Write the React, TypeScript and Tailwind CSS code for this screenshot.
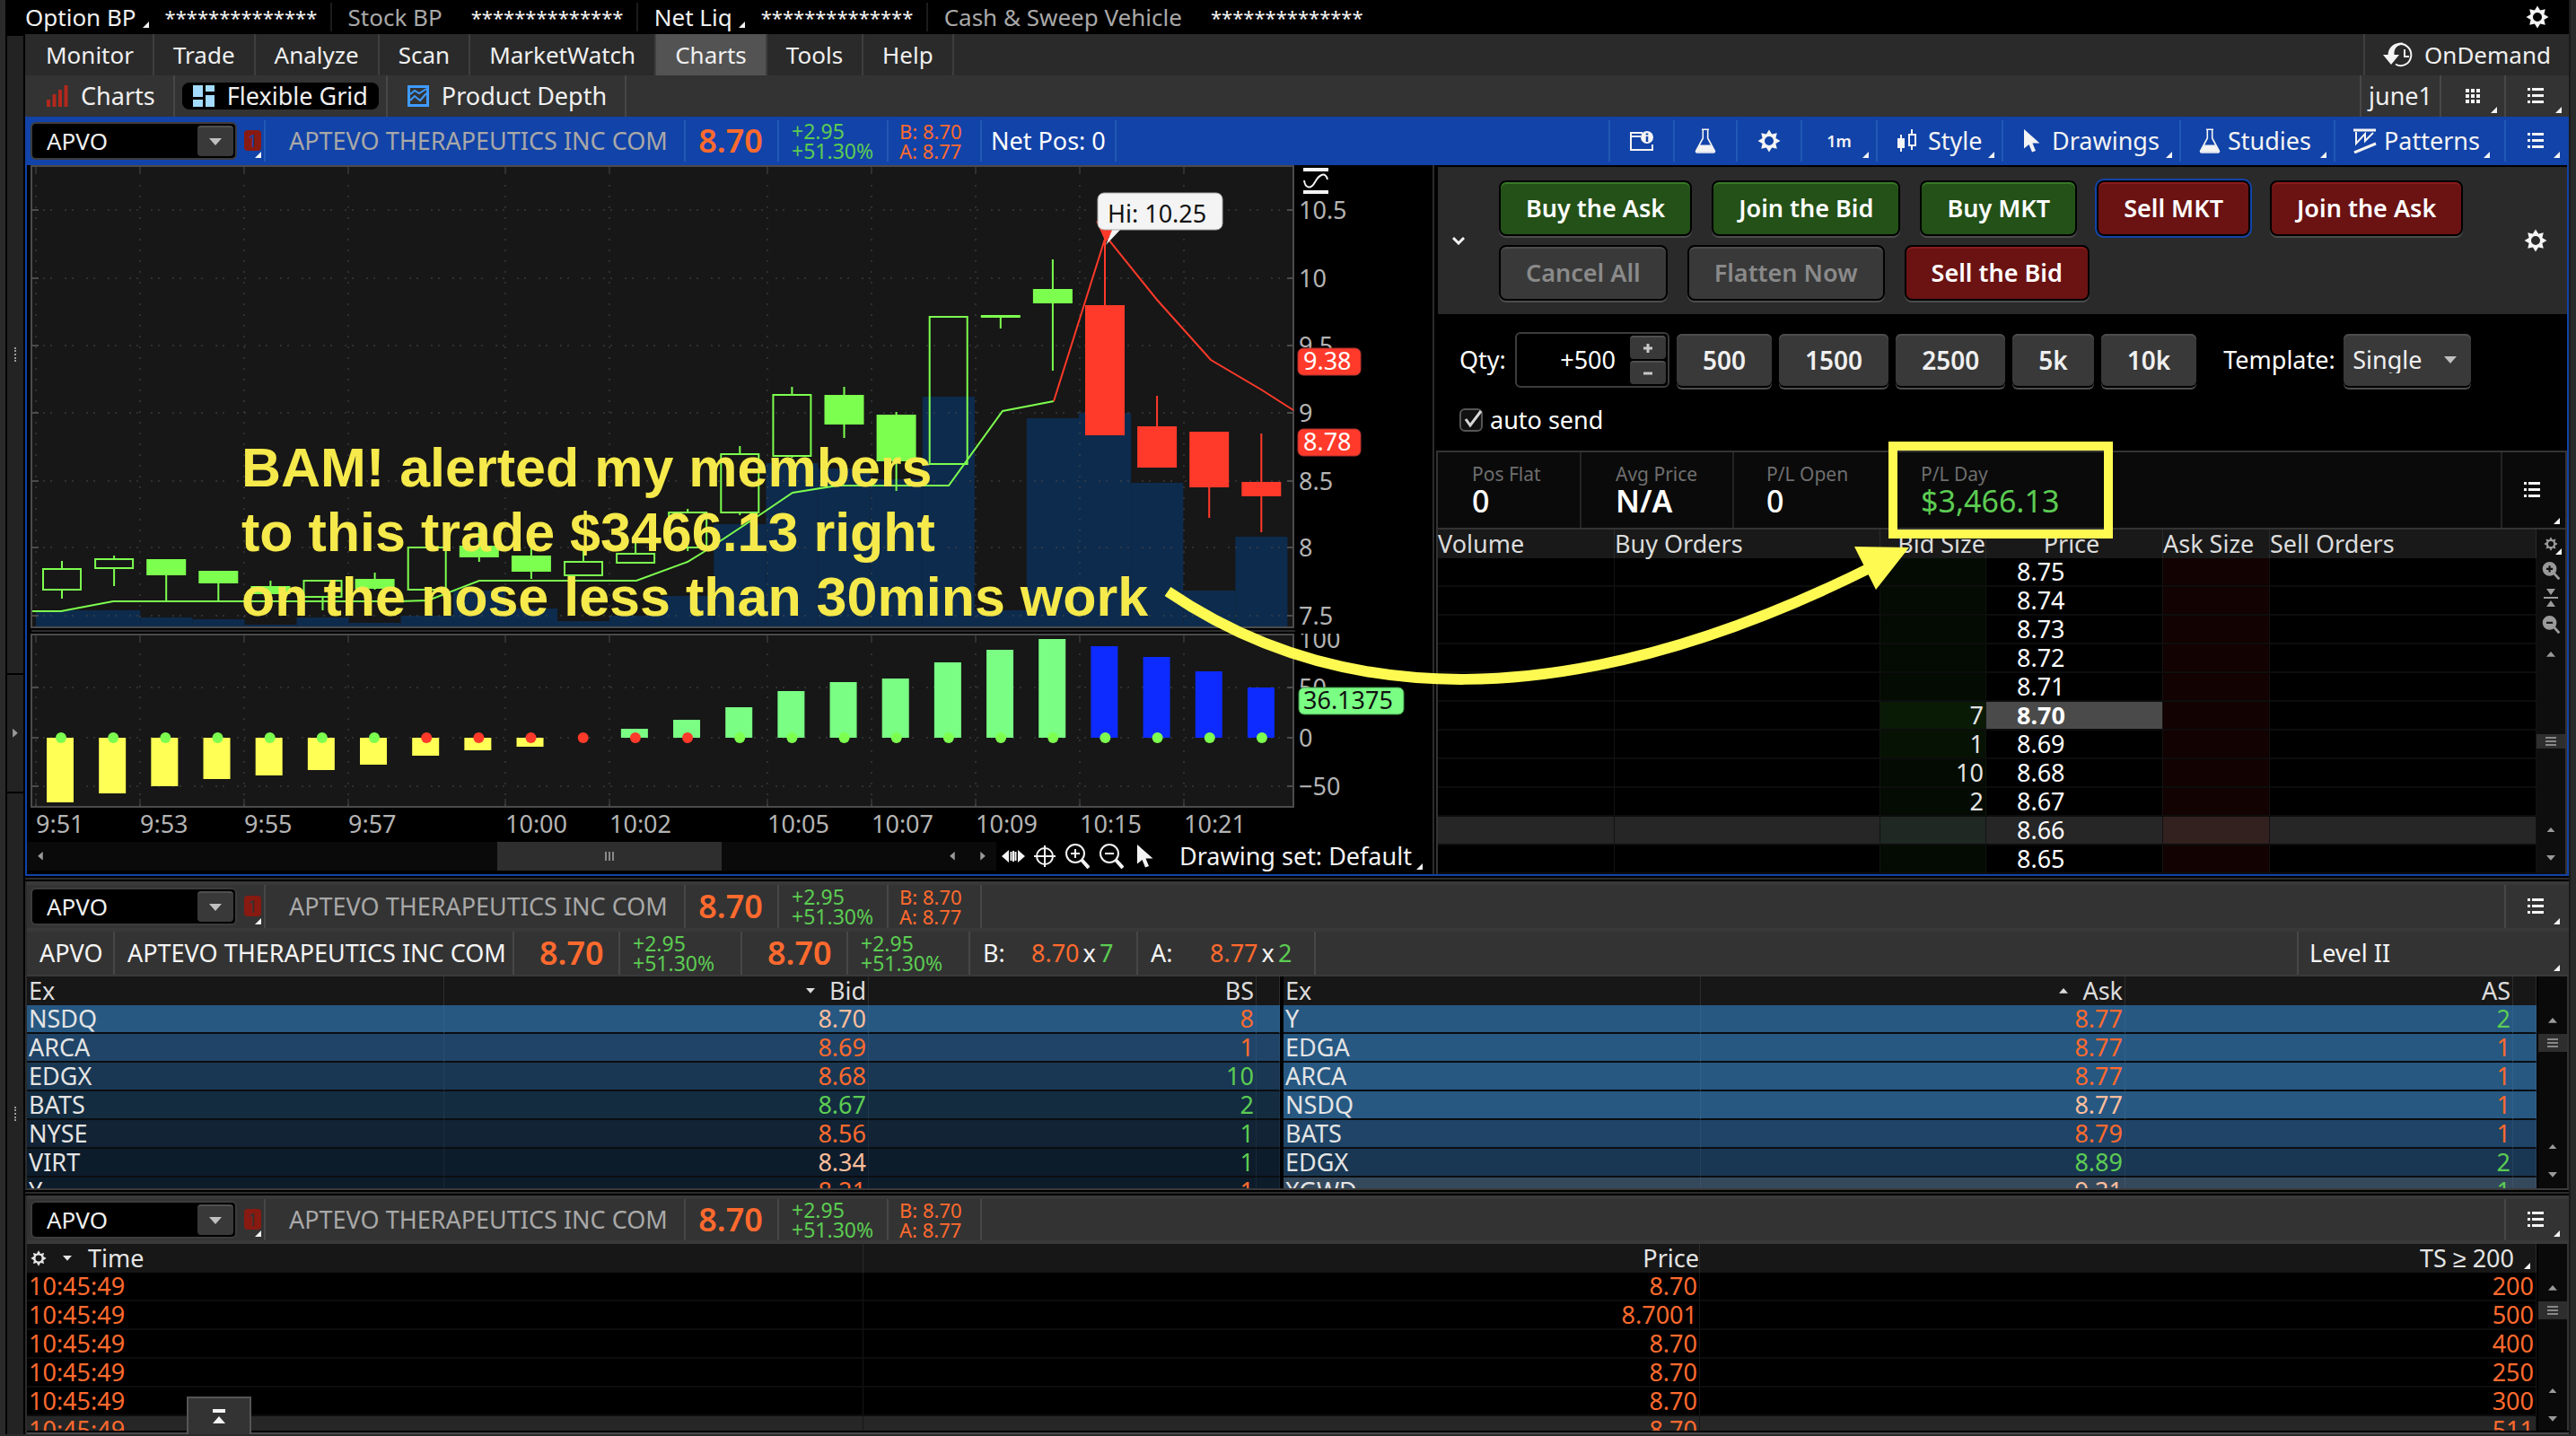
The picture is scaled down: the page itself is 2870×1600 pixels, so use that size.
import { ReactNode } from "react";
import clsx from "clsx";

const GEAR_POINTS = Array.from({ length: 16 }, (_, i) => {
  const r = i % 2 === 0 ? 12.5 : 8;
  const a = (Math.PI / 8) * i;
  return `${(13 + r * Math.sin(a)).toFixed(1)} ${(13 - r * Math.cos(a)).toFixed(1)}`;
}).join("L");

function Gear({ className = "size-[26px]" }: { className?: string }) {
  return (
    <svg viewBox="0 0 26 26" className={className} fill="currentColor">
      <path
        fillRule="evenodd"
        d={`M${GEAR_POINTS}ZM13 8a5 5 0 1 0 0 10a5 5 0 1 0 0 -10Z`}
      />
    </svg>
  );
}

function Corner({ className = "right-1.5 bottom-1.5" }: { className?: string }) {
  return (
    <svg
      viewBox="0 0 7 7"
      className={clsx("absolute size-[7px]", className)}
      fill="#f4f4f4"
    >
      <path d="M7 0V7H0Z" />
    </svg>
  );
}

function ListIcon() {
  return (
    <svg viewBox="0 0 18 18" className="mr-1 size-[18px]" fill="#f4f4f4">
      <path d="M0 0h3v3H0zM5 0h13v3H5zM0 7h3v3H0zM5 7h13v3H5zM0 14h3v3H0zM5 14h13v3H5z" />
    </svg>
  );
}

function Flask() {
  return (
    <svg viewBox="0 0 24 28" className="h-7 w-6" fill="none" stroke="#f4f4f4">
      <path
        d="M8 1.2h8M9.3 2v9L1.5 25.500q0 1.500 1.500 1.500h18q1.500 0 1.500-1.500L14.700 11V2"
        strokeWidth="1.600"
      />
      <path d="M6 19h12l4 7H2z" fill="#f4f4f4" />
    </svg>
  );
}

function Cursor() {
  return (
    <svg viewBox="0 0 20 26" className="h-[26px] w-5" fill="#f4f4f4">
      <path d="M1 0V21.500L6.500 17L10 25.500L14 24L10.500 15.500H18.500Z" />
    </svg>
  );
}

function Down({ className = "w-3.5" }: { className?: string }) {
  return (
    <svg viewBox="0 0 14 8" className={className} fill="currentColor">
      <path d="M0 0H14L7 8Z" />
    </svg>
  );
}

function Up({ className = "w-3.5" }: { className?: string }) {
  return (
    <svg viewBox="0 0 14 8" className={className} fill="currentColor">
      <path d="M0 8H14L7 0Z" />
    </svg>
  );
}

function Magnifier({ sign, solid }: { sign: string; solid?: boolean }) {
  const mark = solid ? "#111" : "#f4f4f4";
  return (
    <svg
      viewBox="0 0 28 28"
      className={solid ? "size-5" : "size-7"}
      fill="none"
      stroke={solid ? "#9a9a9a" : "#f4f4f4"}
      strokeWidth="2"
    >
      <circle cx="12" cy="11" r="10" fill={solid ? "#9a9a9a" : "none"} />
      <path d="M19 18L27 27" strokeWidth="4" />
      <path
        d={sign === "+" ? "M7 11H17M12 6V16" : "M7 11H17"}
        stroke={mark}
        strokeWidth={solid ? 3 : 2}
      />
    </svg>
  );
}

/* ---------- top rows ---------- */

const BALANCES = [
  { label: "Option BP", lit: true },
  { label: "Stock BP", lit: false },
  { label: "Net Liq", lit: true },
  { label: "Cash & Sweep Vehicle", lit: false },
];

function AccountBar() {
  return (
    <div className="flex h-[38px] items-center bg-black pr-[22px] text-[26px]">
      {BALANCES.map((b, i) => (
        <div
          key={b.label}
          className={clsx(
            "flex h-8 items-center pr-3.5",
            i === 0 ? "pl-0" : "pl-[18px]",
            i < 3 && "border-r-2 border-[#1c1c1c]",
          )}
        >
          <span className={b.lit ? "text-[#f0f0f0]" : "text-[#a8a8a8]"}>
            {b.label}
          </span>
          <span className="relative mr-[18px] h-6 w-3.5">
            {b.lit && <Corner className="right-0 bottom-0" />}
          </span>
          <span className="w-[170px] text-[22px] text-[#f4f4f4]">**************</span>
        </div>
      ))}
      <button aria-label="Settings" className="ml-auto text-[#f4f4f4]">
        <Gear />
      </button>
    </div>
  );
}

const MENU = [
  "Monitor",
  "Trade",
  "Analyze",
  "Scan",
  "MarketWatch",
  "Charts",
  "Tools",
  "Help",
];

function MenuBar() {
  return (
    <nav className="flex h-[46px] items-stretch bg-[#2a2a2a] pl-0.5 text-[26px]">
      {MENU.map((m) => (
        <a
          key={m}
          href="#"
          className={clsx(
            "flex items-center border-r-2 border-[#3e3e3e] px-[21px] text-[#f0f0f0]",
            m === "Charts" && "bg-[#535353]",
          )}
        >
          {m}
        </a>
      ))}
      <a
        href="#"
        className="ml-auto flex items-center gap-3 border-l-2 border-[#3e3e3e] px-5 text-[#f0f0f0]"
      >
        <svg viewBox="0 0 34 28" className="h-7 w-[34px]" fill="none" stroke="#f4f4f4">
          <path d="M14 24.500A11.500 12 0 1 0 17 2.500" strokeWidth="2" />
          <path d="M24 8V16H29" strokeWidth="2" />
          <path d="M22 0.500C13 0 6 5 5.500 14H0L9 25L18 14H12.500C12 8 15 3 22 2.500Z" fill="#f4f4f4" stroke="none" />
        </svg>
        OnDemand
      </a>
    </nav>
  );
}

function TabBar() {
  return (
    <div className="flex h-[46px] items-stretch bg-[#333] text-[#f0f0f0]">
      <button className="flex items-center gap-3.5 border-r-2 border-[#474747] pr-5 pl-6">
        <svg viewBox="0 0 24 24" className="size-6" fill="#b1281c">
          <path d="M0 16h4v8H0zM6.500 10h4v14h-4zM13 5h4v19h-4zM19.500 0h4v24h-4z" />
        </svg>
        Charts
      </button>
      <div className="flex items-center border-r-2 border-[#474747] px-2">
        <button className="flex h-[30px] items-center gap-3.5 rounded-lg bg-black px-3">
          <svg viewBox="0 0 24 24" className="size-6" fill="#a3dcff">
            <path d="M0 0h11v13H0zM14 0h10v7H14zM0 16h11v8H0zM14 11h10v13H14z" />
          </svg>
          Flexible Grid
        </button>
      </div>
      <button className="flex items-center gap-3.5 border-r-2 border-[#474747] pr-5 pl-[22px]">
        <svg viewBox="0 0 24 24" className="size-6" fill="none" stroke="#3f9bff">
          <path d="M1.500 1.500H22.500V22.500H1.500Z" strokeWidth="3" />
          <path d="M3 10L8 6L13 9L21 4M3 17L8 12L14 17L21 9" strokeWidth="2" />
        </svg>
        Product Depth
      </button>
      <button className="ml-auto border-l-2 border-[#474747] px-2">june1</button>
      <button
        aria-label="Grid layout"
        className="relative flex w-[72px] items-center justify-center border-l-2 border-[#474747]"
      >
        <svg viewBox="0 0 16 16" className="size-4" fill="#f4f4f4">
          <path d="M0 0h4v4H0zM6 0h4v4H6zM12 0h4v4h-4zM0 6h4v4H0zM6 6h4v4H6zM12 6h4v4h-4zM0 12h4v4H0zM6 12h4v4H6zM12 12h4v4h-4z" />
        </svg>
        <Corner className="right-2 bottom-1" />
      </button>
      <button
        aria-label="Menu"
        className="relative flex w-[72px] items-center justify-center border-l-2 border-[#474747]"
      >
        <ListIcon />
        <Corner className="right-2 bottom-1" />
      </button>
    </div>
  );
}

/* ---------- symbol bar ---------- */

function Change() {
  return (
    <div className="text-[23px] leading-[22px] text-[#5ccc52]">
      +2.95
      <br />
      +51.30%
    </div>
  );
}

function Last() {
  return <span className="text-[36px] font-semibold text-[#ff6a2e]">8.70</span>;
}

type BarProps = { id: string; active?: boolean; tall?: boolean; children?: ReactNode };

function SymbolBar({ id, active, tall, children }: BarProps) {
  return (
    <div
      className={clsx(
        "flex items-stretch border-y-4",
        tall ? "h-14" : "h-[54px]",
        active
          ? "border-[#1243a8] bg-[#1243a8] *:border-[#2159b4]"
          : "border-[#393939] bg-[#333] *:border-[#474747]",
      )}
    >
      <div
        className={clsx(
          "flex items-center gap-2 border-r-2",
          active ? "w-[268px] pl-1.5" : "w-[266px] pl-1",
        )}
      >
        <div className="flex h-[42px] w-[230px] items-center rounded-md border-2 border-[#3c3c3c] bg-black p-0.5">
          <input
            id={id}
            aria-label="Symbol"
            defaultValue="APVO"
            className="min-w-0 flex-1 bg-transparent pl-3.5 text-[26px] text-[#f0f0f0] outline-none"
          />
          <button
            aria-label="Symbol list"
            className="flex h-full w-10 items-center justify-center rounded-sm border-t-2 border-[#505050] bg-[#393939] text-[#c0c0c0]"
          >
            <Down />
          </button>
        </div>
        <button className="relative h-full w-[19px] pb-0.5">
          <span
            className={clsx(
              "block h-[23px] rounded-sm bg-[#881a12] text-xl leading-[23px]",
              active ? "text-[#1243a8]" : "text-[#333]",
            )}
          >
            1
          </span>
          <Corner className="right-0 bottom-1" />
        </button>
      </div>
      <div className="flex w-[468px] items-center border-r-2 pl-[26px] whitespace-nowrap text-[#a8a8a8]">
        APTEVO THERAPEUTICS INC COM
      </div>
      <div className="flex w-[104px] items-center justify-center border-r-2 pr-0.5">
        <Last />
      </div>
      <div className="flex w-[122px] items-center border-r-2 pl-3.5">
        <Change />
      </div>
      <div className="flex w-[104px] items-center border-r-2 pl-3">
        <div className="text-[22px] leading-[22px] text-[#ff6a2e]">
          B: 8.70
          <br />
          A: 8.77
        </div>
      </div>
      {children}
      <button
        aria-label="Menu"
        className={clsx(
          "relative flex w-[72px] items-center justify-center border-l-2",
          !active && "ml-auto",
        )}
      >
        <ListIcon />
        <Corner className="right-2.5 bottom-1" />
      </button>
    </div>
  );
}

function ChartTools() {
  return (
    <>
      <div className="flex w-[150px] items-center border-r-2 pl-2.5 whitespace-nowrap text-white">
        Net Pos: 0
      </div>
      <button
        aria-label="Info"
        className="ml-auto flex w-[72px] items-center justify-center border-l-2"
      >
        <svg viewBox="0 0 26 22" className="h-[22px] w-[26px]" fill="none" stroke="#f4f4f4">
          <path d="M14 2H1V21H25V15M1 6H12" strokeWidth="2" />
          <circle cx="19" cy="7" r="7" fill="#f4f4f4" stroke="none" />
          <path d="M19 2.500V4.500M19 6V12" stroke="#1243a8" strokeWidth="2.500" />
        </svg>
      </button>
      <button
        aria-label="Studies"
        className="flex w-[70px] items-center justify-center border-l-2"
      >
        <Flask />
      </button>
      <button
        aria-label="Settings"
        className="flex w-[72px] items-center justify-center border-l-2 text-[#f4f4f4]"
      >
        <Gear />
      </button>
      <button className="relative flex w-[84px] items-center justify-center border-l-2 text-lg font-semibold text-[#f4f4f4]">
        1m
        <Corner className="right-2 bottom-1" />
      </button>
      <button className="relative flex w-[140px] items-center gap-3 border-l-2 pl-[22px] text-[#f4f4f4]">
        <svg viewBox="0 0 22 26" className="h-[26px] w-[22px]" fill="#f4f4f4">
          <path d="M0 10H8V21H0ZM3 6H5V25H3ZM15 0H17V6H15ZM15 18H17V23H15Z" />
          <path d="M13 6H20V18H13Z" fill="none" stroke="#f4f4f4" strokeWidth="2" />
        </svg>
        Style
        <Corner className="right-2 bottom-1" />
      </button>
      <button className="relative flex w-[198px] items-center gap-3 border-l-2 pl-[22px] text-[#f4f4f4]">
        <Cursor />
        Drawings
        <Corner className="right-2 bottom-1" />
      </button>
      <button className="relative flex w-[172px] items-center gap-2 border-l-2 pl-5 text-[#f4f4f4]">
        <Flask />
        Studies
        <Corner className="right-2 bottom-1" />
      </button>
      <button className="relative flex w-[190px] items-center gap-2 border-l-2 pl-5 text-[#f4f4f4]">
        <svg viewBox="0 0 26 28" className="h-7 w-[26px]" fill="none" stroke="#f4f4f4">
          <path d="M0 2H25" strokeWidth="3" />
          <path d="M3 4L3 17L13 6V14L22 5" strokeWidth="2" />
          <path d="M1 27L25 17" strokeWidth="3" />
        </svg>
        Patterns
        <Corner className="right-4 bottom-1" />
      </button>
    </>
  );
}

/* ---------- price chart ---------- */

type Candle = {
  kind: "up" | "fill" | "down";
  top: number;
  bottom: number;
  high: number;
  low: number;
};

const c = (
  kind: Candle["kind"],
  top: number,
  bottom: number,
  high: number,
  low: number,
): Candle => ({ kind, top, bottom, high, low });

const CANDLES: Candle[] = [
  c("up", 634, 657, 625, 667),
  c("up", 623, 633, 619, 653),
  c("fill", 624, 640, 623, 670),
  c("fill", 637, 649, 637, 670),
  c("fill", 654, 661, 647, 661),
  c("up", 647, 665, 647, 680),
  c("fill", 646, 655, 638, 657),
  c("up", 610, 657, 610, 657),
  c("fill", 609, 620, 588, 626),
  c("fill", 620, 636, 606, 645),
  c("up", 626, 641, 609, 641),
  c("up", 617, 627, 603, 628),
  c("up", 571, 610, 567, 614),
  c("up", 506, 571, 497, 574),
  c("up", 440, 508, 431, 510),
  c("fill", 441, 472, 431, 488),
  c("fill", 463, 513, 459, 547),
  c("up", 353, 517, 353, 517),
  c("up", 352, 352, 352, 366),
  c("fill", 323, 337, 289, 413),
  c("down", 341, 484, 264, 484),
  c("down", 476, 520, 441, 520),
  c("down", 482, 542, 481, 577),
  c("down", 538, 552, 483, 593),
];

const VOLUME_TOPS = [
  680, 680, 688, 690, 696, 688, 694, 686, 658, 678, 692, 686, 664, 584, 516, 522,
  534, 442, 680, 466, 460, 538, 658, 598,
];

const OSCILLATOR = [
  894, 884, 876, 868, 864, 858, 852, 842, 836, 832, 822, 812, 802, 788, 770, 760,
  756, 738, 724, 712, 720, 732, 748, 766,
];

const TIMES: [number, string][] = [
  [40, "9:51"],
  [156, "9:53"],
  [272, "9:55"],
  [388, "9:57"],
  [563, "10:00"],
  [679, "10:02"],
  [855, "10:05"],
  [971, "10:07"],
  [1087, "10:09"],
  [1203, "10:15"],
  [1319, "10:21"],
];

const PRICES: [number, string][] = [
  [234, "10.5"],
  [310, "10"],
  [385, "9.5"],
  [460, "9"],
  [536, "8.5"],
  [610, "8"],
  [686, "7.5"],
];

const LEVELS = [766, 822, 876];
const STEP = 58.17;
const GREEN = "#7dff4f";
const RED = "#ff3a2a";

const barColor = (i: number) =>
  i < 10 ? "#ffff55" : i < 20 ? "#7aff84" : "#0d2bff";

function Chart() {
  return (
    <svg
      viewBox="30 184 1566 754"
      className="block w-full"
      fontSize="27"
      fill="#b4b4b4"
    >
      <rect x="35" y="185" width="1406" height="514" fill="#171717" stroke="#4b4b4b" strokeWidth="2" />
      <rect x="35" y="702" width="1408" height="2" fill="#2c2c2c" />
      <rect x="35" y="707" width="1406" height="192" fill="#171717" stroke="#4b4b4b" strokeWidth="2" />

      {VOLUME_TOPS.map((y, i) => (
        <rect
          key={i}
          x={40 + i * 58.1}
          y={y}
          width="58.200"
          height={698 - y}
          fill="#0d2b4d"
        />
      ))}

      <g stroke="#4b4b4b" strokeWidth="1">
        {TIMES.map(([x]) => (
          <g key={x}>
            <path d={`M${x} 206V698M${x} 728V898`} strokeDasharray="2 10" />
            <path d={`M${x} 186V194M${x} 708V716M${x} 890V898`} />
          </g>
        ))}
        {PRICES.map(([y]) => (
          <g key={y}>
            <path d={`M48 ${y}H1434`} strokeDasharray="2 6 2 14" />
            <path d={`M36 ${y}H43M1434 ${y}H1441`} strokeWidth="2" />
          </g>
        ))}
        {LEVELS.map((y) => (
          <g key={y}>
            <path d={`M48 ${y}H1434`} strokeDasharray="2 6 2 14" />
            <path d={`M36 ${y}H43M1434 ${y}H1441`} strokeWidth="2" />
          </g>
        ))}
      </g>

      {CANDLES.map((k, i) => {
        const x = 69 + i * 58.1;
        const color = k.kind === "down" ? RED : GREEN;
        return (
          <g key={i} stroke={color} strokeWidth="2">
            <path d={`M${x} ${k.high}V${k.top}M${x} ${k.bottom}V${k.low}`} />
            <rect
              x={x - 21}
              y={k.top}
              width="42"
              height={Math.max(k.bottom - k.top, 1)}
              fill={k.kind === "up" ? "none" : color}
            />
          </g>
        );
      })}

      <path
        d="M36 681H68L126 670H444L477 669L534 647H709L766 626L784 615L849 572L883 549L933 541H1057L1117 458L1174 447"
        fill="none"
        stroke={GREEN}
        strokeWidth="2"
      />
      <path
        d="M1174 447L1232 263L1289 334L1349 401L1405 434L1441 457"
        fill="none"
        stroke={RED}
        strokeWidth="2"
      />
      <path d="M1221 246L1240 257L1232 270Z" fill={RED} />
      <path d="M1240 254H1250L1232 273Z" fill="#f4f4f4" />
      <rect x="1223" y="215" width="139" height="41" rx="7" fill="#f4f4f4" stroke="#aaa" />
      <text x="1234" y="248" fill="#111">
        Hi: 10.25
      </text>

      {OSCILLATOR.map((y, i) => (
        <rect
          key={i}
          x={52 + i * STEP}
          y={Math.min(y, 822)}
          width="30"
          height={Math.abs(822 - y)}
          fill={barColor(i)}
        />
      ))}
      {OSCILLATOR.map((_, i) => (
        <circle
          key={i}
          cx={68 + i * STEP}
          cy="822"
          r="6"
          fill={i > 6 && i < 13 ? RED : GREEN}
        />
      ))}

      <path d="M1452 189H1480M1452 214H1480" stroke="#f4f4f4" strokeWidth="4" />
      <path d="M1453 201C1454 209 1460 212 1465 203S1477 191 1479 200" fill="none" stroke="#f4f4f4" strokeWidth="2" />

      {PRICES.map(([y, label]) => (
        <text key={label} x="1447" y={y + 10}>
          {label}
        </text>
      ))}
      <clipPath id="lower-axis">
        <rect x="1443" y="706" width="150" height="200" />
      </clipPath>
      <text x="1447" y="722" clipPath="url(#lower-axis)">
        100
      </text>
      <text x="1447" y="776">50</text>
      <text x="1447" y="832">0</text>
      <text x="1447" y="886">−50</text>

      <g fill={RED} stroke="#a33">
        <rect x="1446" y="388" width="70" height="30" rx="6" />
        <rect x="1446" y="478" width="70" height="30" rx="6" />
      </g>
      <g fill="#fff">
        <text x="1452" y="412">9.38</text>
        <text x="1452" y="502">8.78</text>
      </g>
      <rect x="1447" y="766" width="117" height="30" rx="6" fill="#7aff84" stroke="#3c8c42" />
      <text x="1452" y="790" fill="#111">
        36.1375
      </text>

      {TIMES.map(([x, label]) => (
        <text key={label} x={x} y="928">
          {label}
        </text>
      ))}
    </svg>
  );
}

function ChartPanel() {
  return (
    <div className="relative bg-black">
      <Chart />
      <div className="flex h-8 items-center">
        <div className="flex h-8 flex-1 items-center bg-[#0a0a0a] text-[#9a9a9a]">
          <Down className="ml-2.5 w-2.5 rotate-90" />
          <div className="ml-auto flex h-8 w-[250px] items-center justify-center gap-0.5 bg-[#2e2e2e]">
            <i className="h-2.5 w-0.5 bg-[#888]" />
            <i className="h-2.5 w-0.5 bg-[#888]" />
            <i className="h-2.5 w-0.5 bg-[#888]" />
          </div>
          <Down className="ml-[252px] w-2.5 rotate-90" />
          <Down className="mr-2.5 ml-6 w-2.5 -rotate-90" />
        </div>
        <div className="flex w-[486px] items-center pl-1.5">
          <svg viewBox="0 0 26 14" className="h-3.5 w-[26px]" fill="#f4f4f4">
            <path d="M0 7L8 0V14ZM26 7L18 0V14ZM9.500 2H11.500V12H9.500ZM14.500 2H16.500V12H14.500ZM12 1H14V13H12Z" />
          </svg>
          <svg viewBox="0 0 24 24" className="ml-2.5 size-6" fill="none" stroke="#f4f4f4" strokeWidth="2">
            <circle cx="12" cy="12" r="9" />
            <path d="M12 0V24M0 12H24" />
          </svg>
          <div className="ml-2.5 flex gap-2.5">
            <Magnifier sign="+" />
            <Magnifier sign="-" />
          </div>
          <div className="ml-3.5">
            <Cursor />
          </div>
          <button className="relative ml-7 whitespace-nowrap text-[#f4f4f4]">
            Drawing set: Default
            <Corner className="-right-3 bottom-0" />
          </button>
        </div>
      </div>
      <p className="absolute top-[301px] left-[239px] font-['Liberation_Sans',sans-serif] text-[61px] leading-[72px] font-bold whitespace-nowrap text-[#f6e94b]">
        BAM! alerted my members
        <br />
        to this trade $3466.13 right
        <br />
        on the nose less than 30mins work
      </p>
    </div>
  );
}

/* ---------- active trader ---------- */

type Tone = "buy" | "sell" | "off";

function TradeButton({ tone, ring, children }: { tone: Tone; ring?: boolean; children: ReactNode }) {
  return (
    <button
      disabled={tone === "off"}
      className={clsx(
        "flex h-[62px] items-center justify-center rounded-lg border-2 border-black px-7 font-semibold whitespace-nowrap",
        tone === "buy" &&
          "bg-[#235117] text-white shadow-[inset_0_2px_#367a26,0_2px_#4d4d4d]",
        tone === "sell" &&
          "bg-[#6b1212] text-white shadow-[inset_0_2px_#8a1c1c,0_2px_#4d4d4d]",
        tone === "off" &&
          "bg-[#393939] text-[#8a8a8a] shadow-[inset_0_2px_#4d4d4d,0_2px_#4d4d4d]",
        ring && "outline-2 outline-[#1243a8]",
      )}
    >
      {children}
    </button>
  );
}

const QTY_PRESETS = ["500", "1500", "2500", "5k", "10k"];

const LADDER = [
  { price: "8.75" },
  { price: "8.74" },
  { price: "8.73" },
  { price: "8.72" },
  { price: "8.71" },
  { price: "8.70", size: "7" },
  { price: "8.69", size: "1" },
  { price: "8.68", size: "10" },
  { price: "8.67", size: "2" },
  { price: "8.66" },
  { price: "8.65" },
];

function Stat({ label, value, bold }: { label: string; value: string; bold?: boolean }) {
  return (
    <>
      <div className="text-[21px] leading-6 text-[#6e6e6e]">{label}</div>
      <div className={clsx("text-[34px] leading-9", bold ? "font-semibold" : "font-medium")}>
        {value}
      </div>
    </>
  );
}

function TraderPanel() {
  return (
    <div className="border-l-2 border-[#2c2c2c] bg-black pt-0.5 pl-0.5 text-white">
      <div className="flex h-[164px] border-l-2 border-black bg-[#2a2a2a]">
        <button aria-label="Collapse" className="w-[68px] pl-4">
          <svg viewBox="0 0 14 9" className="w-3.5" fill="none" stroke="#f4f4f4" strokeWidth="3">
            <path d="M1 1L7 7L13 1" />
          </svg>
        </button>
        <div className="flex flex-1 flex-col gap-2.5 pt-[15px]">
          <div className="flex gap-[22px]">
            <TradeButton tone="buy">Buy the Ask</TradeButton>
            <TradeButton tone="buy">Join the Bid</TradeButton>
            <TradeButton tone="buy">Buy MKT</TradeButton>
            <TradeButton tone="sell" ring>
              Sell MKT
            </TradeButton>
            <TradeButton tone="sell">Join the Ask</TradeButton>
          </div>
          <div className="flex gap-[22px]">
            <TradeButton tone="off">Cancel All</TradeButton>
            <TradeButton tone="off">Flatten Now</TradeButton>
            <TradeButton tone="sell">Sell the Bid</TradeButton>
          </div>
        </div>
        <button aria-label="Settings" className="mr-[22px] text-[#f4f4f4]">
          <Gear />
        </button>
      </div>

      <div className="flex h-[152px] flex-col pt-5 pl-[26px]">
        <div className="flex h-[62px] items-center">
          <label htmlFor="qty" className="w-[62px]">
            Qty:
          </label>
          <div className="flex h-[62px] w-[172px] items-center rounded-md border-2 border-[#3c3c3c] p-0.5">
            <input
              id="qty"
              defaultValue="+500"
              className="min-w-0 flex-1 bg-transparent pr-4 text-right outline-none"
            />
            <div className="flex h-full flex-col gap-0.5">
              <button className="flex w-10 flex-1 items-center justify-center rounded-sm border-t-2 border-[#505050] bg-[#393939]" aria-label="Increase">
                <svg viewBox="0 0 10 10" className="size-2.5" fill="#c8c8c8">
                  <path d="M3.500 0h3v3.500H10v3H6.500V10h-3V6.500H0v-3h3.500z" />
                </svg>
              </button>
              <button className="flex w-10 flex-1 items-center justify-center rounded-sm border-t-2 border-[#505050] bg-[#393939]" aria-label="Decrease">
                <svg viewBox="0 0 10 10" className="size-2.5" fill="#c8c8c8">
                  <path d="M0 3.500h10v3H0z" />
                </svg>
              </button>
            </div>
          </div>
          <div className="ml-2 flex gap-2">
            {QTY_PRESETS.map((q) => (
              <button
                key={q}
                className="h-[58px] rounded-md bg-[#393939] px-[29px] text-[28px] font-semibold text-[#f0f0f0] shadow-[inset_0_2px_#4d4d4d,0_2px_#000,0_4px_#4d4d4d]"
              >
                {q}
              </button>
            ))}
          </div>
          <label htmlFor="template" className="ml-[30px] w-[134px]">
            Template:
          </label>
          <div className="relative">
            <select
              id="template"
              className="h-[58px] w-[142px] appearance-none rounded-md bg-[#393939] pl-2.5 text-[#f0f0f0] shadow-[inset_0_2px_#4d4d4d,0_2px_#000,0_4px_#4d4d4d]"
            >
              <option>Single</option>
            </select>
            <span className="pointer-events-none absolute inset-y-0 right-4 flex items-center text-[#c0c0c0]">
              <Down />
            </span>
          </div>
        </div>
        <label className="mt-5 flex h-8 items-center gap-2">
          <span className="relative flex size-[26px]">
            <input
              type="checkbox"
              defaultChecked
              className="peer size-[26px] appearance-none rounded-md border-2 border-[#555] bg-[#111]"
            />
            <svg
              viewBox="0 0 26 26"
              className="pointer-events-none absolute inset-0 hidden peer-checked:block"
              fill="none"
              stroke="#d8d8d8"
              strokeWidth="3"
            >
              <path d="M7 12L12 19L24 3" />
            </svg>
          </span>
          auto send
        </label>
      </div>

      <div className="flex h-[88px] border-2 border-[#333] bg-[#0a0a0a]">
        <div className="w-[160px] border-r-2 border-[#242424] pt-3 pl-[38px]">
          <Stat label="Pos Flat" value="0" />
        </div>
        <div className="w-[170px] border-r-2 border-[#242424] pt-3 pl-[38px]">
          <Stat label="Avg Price" value="N/A" bold />
        </div>
        <div className="w-[172px] pt-3 pl-9">
          <Stat label="P/L Open" value="0" />
        </div>
        <div className="relative w-[250px] pt-3 pl-9">
          <div className="absolute -top-3 -bottom-3 left-0 w-full border-10 border-[#fffa52]" />
          <div className="text-[21px] leading-6 text-[#6e6e6e]">P/L Day</div>
          <div className="text-[34px] leading-9 text-[#5ccc52]">$3,466.13</div>
        </div>
        <button
          aria-label="Menu"
          className="relative ml-auto flex w-[72px] items-center justify-center border-l-2 border-[#242424]"
        >
          <ListIcon />
          <Corner className="right-1.5 bottom-1" />
        </button>
      </div>

      <div className="flex border-l-2 border-[#333]">
        <table className="flex-1 table-fixed border-separate border-spacing-0 text-left">
          <colgroup>
            <col className="w-[197px]" />
            <col className="w-[296px]" />
            <col className="w-[118px]" />
            <col className="w-[197px]" />
            <col className="w-[119px]" />
            <col className="w-[297px]" />
          </colgroup>
          <thead>
            <tr className="h-8 bg-[#191919] leading-8 whitespace-nowrap text-[#dcdcdc] *:border-r *:border-[#2a2a2a] *:p-0 *:font-normal">
              <th>Volume</th>
              <th>Buy Orders</th>
              <th className="text-right">Bid Size</th>
              <th className="text-center">
                <span className="pr-1.5">Price</span>
              </th>
              <th>Ask Size</th>
              <th>Sell Orders</th>
            </tr>
          </thead>
          <tbody>
            {LADDER.map((r) => {
              const hover = r.price === "8.66";
              const last = r.price === "8.70";
              return (
                <tr
                  key={r.price}
                  className={clsx(
                    "leading-[30px] *:border-r *:border-b-2 *:border-r-[#131313] *:border-b-[#0d0d0d] *:p-0",
                    hover && "bg-[#262626]",
                  )}
                >
                  <td />
                  <td />
                  <td
                    className={clsx(
                      "text-right text-[#e4e4e4]",
                      hover
                        ? "bg-[#1f2822]"
                        : last
                          ? "bg-[#0a1b05]"
                          : r.size === "1"
                            ? "bg-[#061304]"
                            : "bg-[#030b03]",
                    )}
                  >
                    <span className="pr-0.5">{r.size}</span>
                  </td>
                  <td className={clsx(last && "bg-[#4a4a4a] font-bold")}>
                    <span className="pl-[34px]">{r.price}</span>
                  </td>
                  <td className={hover ? "bg-[#33211f]" : "bg-[#130202]"} />
                  <td />
                </tr>
              );
            })}
          </tbody>
        </table>
        <div className="flex w-[34px] flex-col items-center border-r-2 border-[#333] bg-[#0e0e0e] text-[#9a9a9a]">
          <div className="relative flex h-8 w-full items-center justify-center">
            <Gear className="size-4" />
            <Corner className="right-1 bottom-1" />
          </div>
          <div className="mt-1">
            <Magnifier sign="+" solid />
          </div>
          <svg viewBox="0 0 16 20" className="mt-2.5 h-5 w-4" fill="#9a9a9a">
            <path d="M3 0H13L8 7ZM0 9H16V11H0ZM3 20H13L8 13Z" />
          </svg>
          <div className="mt-2.5">
            <Magnifier sign="-" solid />
          </div>
          <Up className="mt-5 w-2.5" />
          <div className="mt-[86px] flex h-4 w-full flex-col items-center justify-center gap-0.5 bg-[#2e2e2e]">
            <i className="h-0.5 w-3 bg-[#888]" />
            <i className="h-0.5 w-3 bg-[#888]" />
            <i className="h-0.5 w-3 bg-[#888]" />
          </div>
          <Up className="mt-auto w-2.5" />
          <Down className="mt-[26px] mb-[15px] w-2.5" />
        </div>
      </div>
    </div>
  );
}

/* ---------- level II ---------- */

type Quote = { ex: string; price: string; size: string; row: string; pc: string; sc: string };

const O = "text-[#ff6a2e]";
const G = "text-[#5ccc52]";
const P = "text-[#ffbe9c]";

const BIDS: Quote[] = [
  { ex: "NSDQ", price: "8.70", size: "8", row: "bg-[#265882]", pc: P, sc: O },
  { ex: "ARCA", price: "8.69", size: "1", row: "bg-[#1f4467]", pc: O, sc: O },
  { ex: "EDGX", price: "8.68", size: "10", row: "bg-[#193752]", pc: O, sc: G },
  { ex: "BATS", price: "8.67", size: "2", row: "bg-[#132c40]", pc: G, sc: G },
  { ex: "NYSE", price: "8.56", size: "1", row: "bg-[#112334]", pc: O, sc: G },
  { ex: "VIRT", price: "8.34", size: "1", row: "bg-[#0d1c2b]", pc: P, sc: G },
  { ex: "Y", price: "8.21", size: "1", row: "bg-[#0d1c2b]", pc: O, sc: O },
];

const ASKS: Quote[] = [
  { ex: "Y", price: "8.77", size: "2", row: "bg-[#265882]", pc: O, sc: G },
  { ex: "EDGA", price: "8.77", size: "1", row: "bg-[#265882]", pc: O, sc: O },
  { ex: "ARCA", price: "8.77", size: "1", row: "bg-[#265882]", pc: O, sc: O },
  { ex: "NSDQ", price: "8.77", size: "1", row: "bg-[#265882]", pc: P, sc: O },
  { ex: "BATS", price: "8.79", size: "1", row: "bg-[#1f4467]", pc: O, sc: O },
  { ex: "EDGX", price: "8.89", size: "2", row: "bg-[#193752]", pc: G, sc: G },
  { ex: "XGWD", price: "9.31", size: "1", row: "bg-[#35495d]", pc: P, sc: G },
];

function QuoteTable({ side, size, quotes }: { side: string; size: string; quotes: Quote[] }) {
  return (
    <table className="w-full table-fixed self-start border-separate border-spacing-0">
      <colgroup>
        <col className="w-[465px]" />
        <col className="w-[473px]" />
        <col className="w-[432px]" />
        <col className="w-[26px]" />
      </colgroup>
      <thead>
        <tr className="h-8 bg-[#171717] leading-8 text-[#dcdcdc] *:border-r *:border-white/10 *:p-0 *:font-normal">
          <th className="text-left">
            <span className="pl-0.5">Ex</span>
          </th>
          <th>
            <span className="flex items-center justify-end gap-4 pr-0.5">
              {side === "Bid" ? <Down className="w-2.5" /> : <Up className="w-2.5" />}
              {side}
            </span>
          </th>
          <th className="text-right">
            <span className="pr-0.5">{size}</span>
          </th>
          <th />
        </tr>
      </thead>
      <tbody>
        {quotes.map((q) => (
          <tr
            key={q.ex}
            className={clsx(
              "leading-[30px] *:border-r *:border-b-2 *:border-r-white/5 *:border-b-[#0b0d10] *:p-0",
              q.row,
            )}
          >
            <td className="text-[#e4e4e4]">
              <span className="pl-0.5">{q.ex}</span>
            </td>
            <td className={clsx("text-right", q.pc)}>
              <span className="pr-0.5">{q.price}</span>
            </td>
            <td className={clsx("text-right", q.sc)}>
              <span className="pr-0.5">{q.size}</span>
            </td>
            <td />
          </tr>
        ))}
      </tbody>
    </table>
  );
}

function ScrollBar({ className, end }: { className: string; end: string }) {
  return (
    <div className="flex w-[34px] shrink-0 flex-col items-center border-r-2 border-[#333] bg-[#0a0a0a] text-[#9a9a9a]">
      <Up className={clsx("w-2.5", className)} />
      <div className="mt-3 flex h-5 w-full flex-col items-center justify-center gap-0.5 bg-[#2e2e2e]">
        <i className="h-0.5 w-3 bg-[#888]" />
        <i className="h-0.5 w-3 bg-[#888]" />
        <i className="h-0.5 w-3 bg-[#888]" />
      </div>
      <Up className="mt-auto w-2.5" />
      <Down className={clsx("mt-[26px] w-2.5", end)} />
    </div>
  );
}

function LevelTwo() {
  return (
    <section className="border-b-2 border-l-2 border-b-[#3a3a3a] border-l-[#2c2c2c]">
      <SymbolBar id="symbol-level2" tall />
      <div className="flex h-[50px] items-stretch border-b-2 border-[#393939] bg-[#333] whitespace-nowrap text-[#f4f4f4] *:flex *:items-center *:border-[#474747]">
        <div className="w-[98px] border-r-2 pl-3.5">APVO</div>
        <div className="w-[445px] border-r-2 pl-3.5">APTEVO THERAPEUTICS INC COM</div>
        <div className="w-[118px] border-r-2 pl-7">
          <Last />
        </div>
        <div className="w-[136px] border-r-2 pl-3.5">
          <Change />
        </div>
        <div className="w-[118px] border-r-2 pl-7">
          <Last />
        </div>
        <div className="w-[136px] border-r-2 pl-3.5">
          <Change />
        </div>
        <div className="w-[187px] border-r-2 pl-3.5">
          <span className="w-[54px]">B:</span>
          <span className={O}>8.70</span>
          <span className="px-1">x</span>
          <span className={G}>7</span>
        </div>
        <div className="w-[198px] border-r-2 pl-3.5">
          <span className="w-[66px]">A:</span>
          <span className={O}>8.77</span>
          <span className="px-1">x</span>
          <span className={G}>2</span>
        </div>
        <button className="relative ml-auto w-[303px] border-l-2 pl-3">
          Level II
          <Corner className="right-2.5 bottom-1" />
        </button>
      </div>
      <div className="flex h-[236px] overflow-hidden bg-black">
        <div className="grid flex-1 grid-cols-2 gap-1 pr-0.5">
          <QuoteTable side="Bid" size="BS" quotes={BIDS} />
          <QuoteTable side="Ask" size="AS" quotes={ASKS} />
        </div>
        <ScrollBar className="mt-[46px]" end="mb-3" />
      </div>
    </section>
  );
}

/* ---------- time & sales ---------- */

const SALES = [
  ["10:45:49", "8.70", "200"],
  ["10:45:49", "8.7001", "500"],
  ["10:45:49", "8.70", "400"],
  ["10:45:49", "8.70", "250"],
  ["10:45:49", "8.70", "300"],
  ["10:45:49", "8.70", "511"],
];

function TimeAndSales() {
  return (
    <section className="relative border-l-2 border-[#2c2c2c]">
      <SymbolBar id="symbol-sales" />
      <div className="flex h-[208px] overflow-hidden bg-black">
        <div className="flex-1 pr-0.5">
          <table className="w-full table-fixed border-separate border-spacing-0">
            <colgroup>
              <col className="w-[932px]" />
              <col className="w-[932px]" />
              <col className="w-[932px]" />
            </colgroup>
            <thead>
              <tr className="h-8 bg-[#171717] leading-8 text-[#e4e4e4] *:border-r *:border-[#2a2a2a] *:p-0 *:font-normal">
                <th className="text-left">
                  <span className="flex items-center pl-1">
                    <Gear className="size-[18px]" />
                    <Down className="mr-[18px] ml-[18px] w-2.5" />
                    Time
                  </span>
                </th>
                <th className="text-right">Price</th>
                <th className="relative text-right">
                  <span className="pr-6">TS ≥ 200</span>
                  <Corner className="right-1.5 bottom-1" />
                </th>
              </tr>
            </thead>
            <tbody>
              {SALES.map(([time, price, size], i) => (
                <tr
                  key={i}
                  className={clsx(
                    "leading-[30px] text-[#ff6a2e] *:border-r *:border-b-2 *:border-r-[#161616] *:border-b-[#0d0d0d] *:p-0",
                    i === 5 && "bg-[#262626]",
                  )}
                >
                  <td>
                    <span className="pl-0.5">{time}</span>
                  </td>
                  <td className="text-right">
                    <span className="pr-0.5">{price}</span>
                  </td>
                  <td className="text-right">
                    <span className="pr-0.5">{size}</span>
                  </td>
                </tr>
              ))}
            </tbody>
          </table>
        </div>
        <ScrollBar className="mt-[46px]" end="mb-2.5" />
      </div>
      <div className="h-1 border-b-2 border-[#4b4b4b] bg-black" />
      <button
        aria-label="Expand"
        className="absolute bottom-0 left-[178px] flex h-[42px] w-[72px] flex-col items-center justify-center gap-1 border-2 border-b-0 border-[#555] bg-[#333] text-[#f4f4f4]"
      >
        <i className="h-1 w-3.5 bg-[#f4f4f4]" />
        <Up />
      </button>
    </section>
  );
}

function Grip() {
  return <i className="h-4 w-0.5 border-l-2 border-dotted border-[#9a9a9a]" />;
}

export default function App() {
  return (
    <div className="flex overflow-hidden bg-[#2a2a2a] pb-0.5 font-['Noto_Sans',sans-serif] text-[27px] leading-[30px]">
      <div className="w-1.5" />
      <aside className="flex w-[22px] flex-col gap-0.5 border-x-2 border-black bg-black pt-10 *:flex *:items-center *:justify-center *:bg-[#232323]">
        <div className="h-[710px]">
          <Grip />
        </div>
        <div className="h-[130px] text-[#9a9a9a]">
          <Up className="w-2.5 rotate-90" />
        </div>
        <div className="flex-1">
          <Grip />
        </div>
      </aside>

      <main className="min-w-0 flex-1">
        <AccountBar />
        <MenuBar />
        <TabBar />
        <section className="relative">
          <SymbolBar id="symbol-chart" active>
            <ChartTools />
          </SymbolBar>
          <div className="grid grid-cols-[1566fr_1264fr] border-x-2 border-b-2 border-[#1243a8]">
            <ChartPanel />
            <TraderPanel />
          </div>
          <svg
            viewBox="28 130 2834 846"
            className="pointer-events-none absolute inset-0 h-full w-full"
            fill="#fffa52"
          >
            <path
              d="M1301 659C1485 784 1740 804 2085 632"
              fill="none"
              stroke="#fffa52"
              strokeWidth="12"
            />
            <path d="M2066 609L2127 610L2090 657Z" />
          </svg>
        </section>
        <div className="h-1.5 border-y-2 border-black bg-[#2c2c2c]" />
        <LevelTwo />
        <div className="h-1.5 border-y-2 border-black bg-[#2c2c2c]" />
        <TimeAndSales />
      </main>
      <div className="w-2 border-l-2 border-[#1a1a1a]" />
    </div>
  );
}
